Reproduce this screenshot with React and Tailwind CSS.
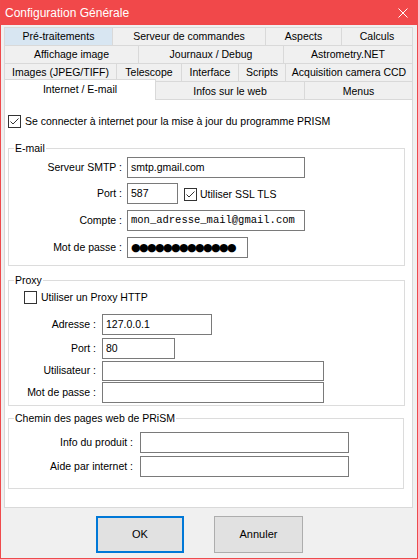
import React from 'react'

const FONT = "font-['Liberation_Sans',Arial,sans-serif]"

function Tab({ label, w, last, hover }) {
  return (
    <div
      className={`${w} h-[18px] flex items-center justify-center border-t border-l border-[#d9d9d9] ${last ? 'border-r' : ''} ${hover ? 'bg-[#d8e6f2]' : 'bg-[#f0f0f0]'} whitespace-nowrap`}
    >
      {label}
    </div>
  )
}

function Check({ checked }) {
  return (
    <span className="w-[13px] h-[13px] border border-[#333] bg-white flex items-center justify-center shrink-0">
      {checked && (
        <svg width="11" height="11" viewBox="0 0 11 11">
          <path d="M1.5 5.5 L4 8 L9.5 2.5" fill="none" stroke="#333" strokeWidth="1" />
        </svg>
      )}
    </span>
  )
}

function Field({ w, h = 'h-[21px]', children, mono }) {
  return (
    <div className={`${w} ${h} border border-[#7a7a7a] bg-white flex items-center pl-[3px] ${mono ? "font-['Liberation_Mono',monospace] text-[10.5px]" : ''} whitespace-nowrap overflow-hidden`}>
      {children}
    </div>
  )
}

function Group({ title, h, w, children }) {
  return (
    <div className={`relative ${h} ${w} ml-[3px] border border-[#dcdcdc]`}>
      <span className="absolute -top-[7px] left-[5px] bg-white px-px leading-[13px]">{title}</span>
      {children}
    </div>
  )
}

export default function App() {
  return (
    <div className={`w-[418px] h-[559px] bg-[#f0f0f0] border-x border-b border-[#ef4a4c] flex flex-col text-[10.5px] text-black ${FONT}`}>
      {/* Barre de titre */}
      <div className="h-[25px] bg-[#f1484a] flex items-center justify-between pl-[4px] pr-[9px] text-white text-[12px]">
        <span>Configuration Générale</span>
        <svg width="10" height="10" viewBox="0 0 10 10">
          <path d="M0.5 0.5 L9.5 9.5 M9.5 0.5 L0.5 9.5" stroke="white" strokeWidth="1" />
        </svg>
      </div>

      {/* Onglets */}
      <div className="mt-[2px] ml-[3px] w-[409px] flex flex-col">
        <div className="flex">
          <Tab label="Pré-traitements" w="w-[108px]" hover />
          <Tab label="Serveur de commandes" w="w-[153px]" />
          <Tab label="Aspects" w="w-[76px]" />
          <Tab label="Calculs" w="w-[72px]" last />
        </div>
        <div className="flex">
          <Tab label="Affichage image" w="w-[134px]" />
          <Tab label="Journaux / Debug" w="w-[145px]" />
          <Tab label="Astrometry.NET" w="w-[130px]" last />
        </div>
        <div className="flex">
          <Tab label="Images (JPEG/TIFF)" w="w-[112px]" />
          <Tab label="Telescope" w="w-[65px]" />
          <Tab label="Interface" w="w-[57px]" />
          <Tab label="Scripts" w="w-[47px]" />
          <Tab label="Acquisition camera CCD" w="w-[128px]" last />
        </div>
        <div className="flex items-start h-[18px]">
          <div className="relative z-10 w-[152px] h-[21px] -mt-[2px] bg-white border-t border-x border-[#d9d9d9] flex items-center justify-center">
            Internet / E-mail
          </div>
          <div className="w-[149px] h-[18px] flex items-center justify-center border-t border-r border-[#d9d9d9] pt-[2px]">Infos sur le web</div>
          <div className="w-[108px] h-[18px] flex items-center justify-center border-t border-r border-[#d9d9d9] pt-[2px]">Menus</div>
        </div>

        {/* Panneau */}
        <div className="h-[409px] bg-white border border-[#d9d9d9] flex flex-col">
          <div className="ml-[3px] mt-[15px] flex items-center gap-[4px] h-[13px]">
            <Check checked />
            <span>Se connecter à internet pour la mise à jour du programme PRISM</span>
          </div>

          <div className="mt-[20px]">
            <Group title="E-mail" h="h-[118px]" w="w-[397px]">
              <div className="flex flex-col pt-[8px]">
                <div className="flex items-center gap-[5px]">
                  <span className="w-[113px] text-right">Serveur SMTP :</span>
                  <Field w="w-[178px]">smtp.gmail.com</Field>
                </div>
                <div className="flex items-center gap-[5px] mt-[5px]">
                  <span className="w-[113px] text-right">Port :</span>
                  <Field w="w-[51px]">587</Field>
                  <div className="ml-[1px] flex items-center gap-[3px] mt-[2px]">
                    <Check checked />
                    <span>Utiliser SSL TLS</span>
                  </div>
                </div>
                <div className="flex items-center gap-[5px] mt-[6px]">
                  <span className="w-[113px] text-right">Compte :</span>
                  <Field w="w-[178px]" mono>mon_adresse_mail@gmail.com</Field>
                </div>
                <div className="flex items-center gap-[5px] mt-[6px]">
                  <span className="w-[113px] text-right">Mot de passe :</span>
                  <Field w="w-[121px]">
                    <span className="font-['DejaVu_Sans',sans-serif] text-[11px] tracking-[-1.6px] leading-none">●●●●●●●●●●●●●</span>
                  </Field>
                </div>
              </div>
            </Group>
          </div>

          <div className="mt-[14px]">
            <Group title="Proxy" h="h-[126px]" w="w-[397px]">
              <div className="flex flex-col pt-[10px]">
                <div className="ml-[15px] flex items-center gap-[4px] h-[13px]">
                  <Check />
                  <span>Utiliser un Proxy HTTP</span>
                </div>
                <div className="flex items-center gap-[6px] mt-[10px]">
                  <span className="w-[87px] text-right">Adresse :</span>
                  <Field w="w-[110px]">127.0.0.1</Field>
                </div>
                <div className="flex items-center gap-[6px] mt-[3px]">
                  <span className="w-[87px] text-right">Port :</span>
                  <Field w="w-[73px]">80</Field>
                </div>
                <div className="flex items-center gap-[6px] mt-[2px]">
                  <span className="w-[87px] text-right">Utilisateur :</span>
                  <Field w="w-[222px]" h="h-[20px]" />
                </div>
                <div className="flex items-center gap-[6px] mt-[1px]">
                  <span className="w-[87px] text-right">Mot de passe :</span>
                  <Field w="w-[222px]" />
                </div>
              </div>
            </Group>
          </div>

          <div className="mt-[12px]">
            <Group title="Chemin des pages web de PRiSM" h="h-[71px]" w="w-[396px]">
              <div className="flex flex-col pt-[13px]">
                <div className="flex items-center gap-[7px]">
                  <span className="w-[124px] text-right">Info du produit :</span>
                  <Field w="w-[209px]" />
                </div>
                <div className="flex items-center gap-[7px] mt-[3px]">
                  <span className="w-[124px] text-right">Aide par internet :</span>
                  <Field w="w-[209px]" />
                </div>
              </div>
            </Group>
          </div>
        </div>
      </div>

      {/* Boutons */}
      <div className="mt-[8px] ml-[95px] flex gap-[30px]">
        <button className="w-[88px] h-[37px] border-2 border-[#0078d7] bg-[#e1e1e1] text-[11px]">OK</button>
        <button className="w-[89px] h-[37px] border border-[#adadad] bg-[#e1e1e1] text-[11px]">Annuler</button>
      </div>
    </div>
  )
}
